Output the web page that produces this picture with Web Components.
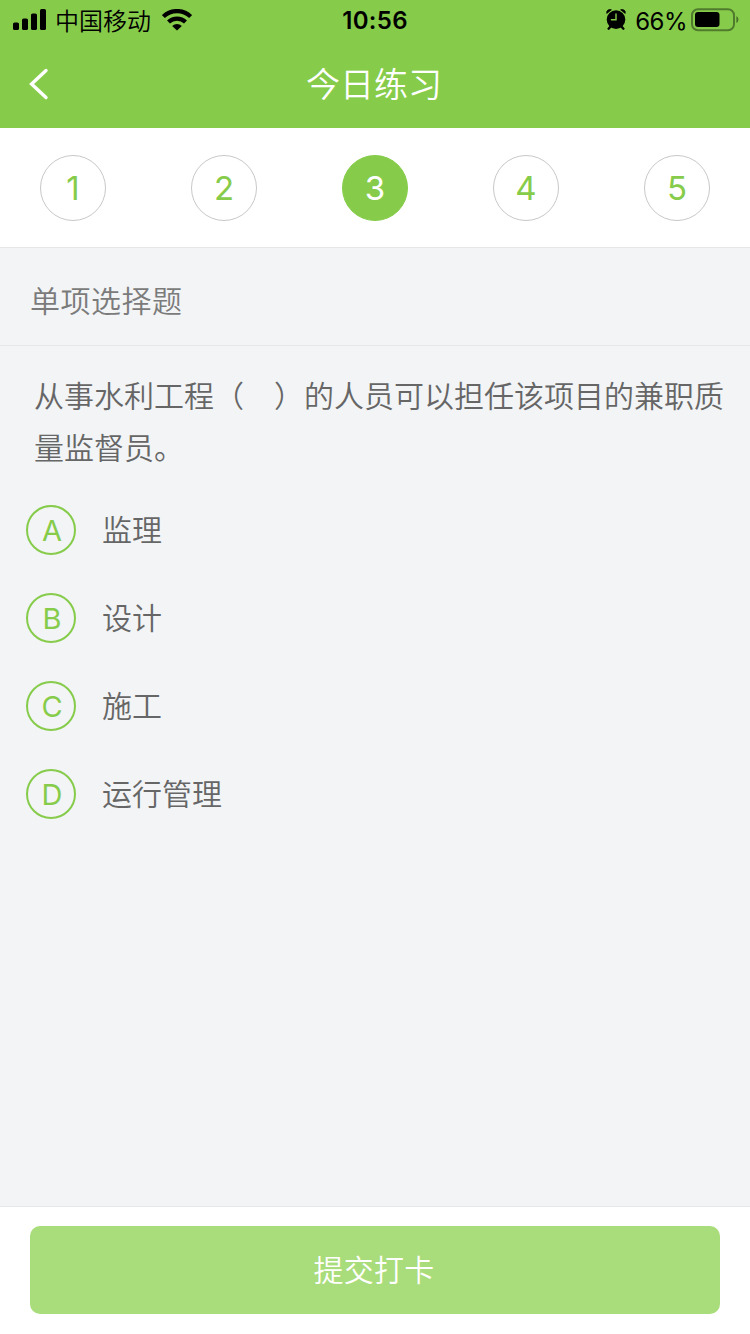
<!DOCTYPE html>
<html lang="zh-CN">
<head>
<meta charset="utf-8">
<meta name="viewport" content="width=device-width, initial-scale=1">
<title>今日练习</title>
<style>
  :root {
    --green: #86cc4a;
    --green-soft: #a9dc7a;
    --line: #e6e7e9;
    --page: #f2f4f6;
  }
  body {
    margin: 0;
    background: var(--page);
    font-family: Inter, "Noto Sans CJK SC", sans-serif;
    font-weight: 350;
  }
</style>
</head>
<body>
<practice-page>
  <status-bar slot="top" carrier="中国移动" time="10:56" battery="66"></status-bar>
  <nav-bar slot="top">今日练习</nav-bar>
  <step-list slot="top">
    <step-dot>1</step-dot>
    <step-dot>2</step-dot>
    <step-dot active>3</step-dot>
    <step-dot>4</step-dot>
    <step-dot>5</step-dot>
  </step-list>
  <section-title>单项选择题</section-title>
  <question-block>
    从事水利工程（　）的人员可以担任该项目的兼职质量监督员。
    <answer-option slot="options" key="A">监理</answer-option>
    <answer-option slot="options" key="B">设计</answer-option>
    <answer-option slot="options" key="C">施工</answer-option>
    <answer-option slot="options" key="D">运行管理</answer-option>
  </question-block>
  <submit-bar slot="bottom">提交打卡</submit-bar>
</practice-page>

<script>
class PracticePage extends HTMLElement {
  connectedCallback() {
    this.attachShadow({ mode: 'open' });
    this.shadowRoot.innerHTML = `
      <style>
        :host {
          display: flex;
          flex-direction: column;
          height: 1334px;
          overflow: hidden;
        }
        main {
          flex: 1;
          min-height: 0;
        }
      </style>
      <slot name="top"></slot>
      <main><slot></slot></main>
      <slot name="bottom"></slot>
    `;
  }
}
customElements.define('practice-page', PracticePage);

class StatusBar extends HTMLElement {
  connectedCallback() {
    this.attachShadow({ mode: 'open' });
    this.shadowRoot.innerHTML = `
      <style>
        :host {
          display: grid;
          grid-template-columns: 1fr auto 1fr;
          align-items: center;
          height: 40px;
          padding: 0 11px 0 13px;
          background: var(--green);
          color: #000;
          font-size: 24px;
        }
        svg {
          display: block;
        }
        .left, .right {
          display: flex;
          align-items: center;
        }
        .right {
          justify-content: flex-end;
        }
        .carrier {
          margin: 0 11px 0 9px;
          line-height: 36px;
          padding-top: 4px;
        }
        .time {
          padding: 2px 2px 0 0;
          font-size: 24px;
          font-weight: 600;
          letter-spacing: 0.3px;
          line-height: 38px;
        }
        .percent {
          margin: 0 4px 0 9px;
          padding-top: 3px;
          font-weight: 400;
          line-height: 37px;
          letter-spacing: -0.5px;
        }
      </style>
      <div class="left">
        <svg width="33" height="22" viewBox="0 0 33 22">
          <rect x="0" y="13.5" width="6" height="7.5" rx="1.6"></rect>
          <rect x="9" y="9.5" width="6" height="11.5" rx="1.6"></rect>
          <rect x="18" y="4.5" width="6" height="16.5" rx="1.6"></rect>
          <rect x="27" y="0" width="6" height="21" rx="1.6"></rect>
        </svg>
        <span class="carrier">${this.getAttribute('carrier')}</span>
        <svg width="30" height="22" viewBox="0 0 30 22">
          <g fill="none" stroke="#000" stroke-width="4.2">
            <path d="M1.4 7.6a19.4 19.4 0 0 1 27.2 0"></path>
            <path d="M6.5 13.1a12.2 12.2 0 0 1 17 0"></path>
          </g>
          <path d="M10.2 17a7 7 0 0 1 9.6 0L15 21.6z"></path>
        </svg>
      </div>
      <div class="time">${this.getAttribute('time')}</div>
      <div class="right">
        <svg width="20" height="22" viewBox="0 0 20 22">
          <circle cx="10" cy="10.6" r="9.3"></circle>
          <path d="M.8 4.4a3.2 3.2 0 0 1 4.6-3.6zM19.2 4.4a3.2 3.2 0 0 0-4.6-3.6z" stroke="#000" stroke-width=".8"></path>
          <path d="M4.6 17.5l-2 2.2M15.4 17.5l2 2.2" stroke="#000" stroke-width="2.4" stroke-linecap="round"></path>
          <path d="M10 5v5.8H5.4" fill="none" stroke="#86cc4a" stroke-width="1.4" stroke-linecap="round"></path>
        </svg>
        <span class="percent">${this.getAttribute('battery')}%</span>
        <svg width="48" height="24" viewBox="0 0 48 24">
          <rect x="1" y="1.2" width="42" height="21" rx="6" fill="none" stroke="#000" stroke-opacity=".4" stroke-width="2"></rect>
          <rect x="4" y="4" width="24.5" height="15" rx="3"></rect>
          <path d="M45.4 8a4 4 0 0 1 0 7z" fill-opacity=".45"></path>
        </svg>
      </div>
    `;
  }
}
customElements.define('status-bar', StatusBar);

class NavBar extends HTMLElement {
  connectedCallback() {
    this.attachShadow({ mode: 'open' });
    this.shadowRoot.innerHTML = `
      <style>
        :host {
          display: grid;
          grid-template-columns: 60px 1fr 62px;
          align-items: center;
          height: 88px;
          background: var(--green);
          color: #fff;
          font-size: 34px;
          text-align: center;
        }
        svg {
          display: block;
          margin-left: 28px;
        }
        .title {
          padding-top: 2px;
          line-height: 86px;
        }
      </style>
      <svg width="22" height="34" viewBox="0 0 22 34">
        <path d="M18 3.5L3.6 17.1L18 30.5" fill="none" stroke="#fff" stroke-width="3.4" stroke-linecap="round"></path>
      </svg>
      <div class="title"><slot></slot></div>
    `;
  }
}
customElements.define('nav-bar', NavBar);

class StepList extends HTMLElement {
  connectedCallback() {
    this.attachShadow({ mode: 'open' });
    this.shadowRoot.innerHTML = `
      <style>
        :host {
          display: flex;
          justify-content: space-between;
          align-items: center;
          box-sizing: border-box;
          height: 120px;
          padding: 0 40px;
          background: #fff;
          border-bottom: 1px solid var(--line);
        }
      </style>
      <slot></slot>
    `;
  }
}
customElements.define('step-list', StepList);

class StepDot extends HTMLElement {
  connectedCallback() {
    this.attachShadow({ mode: 'open' });
    this.shadowRoot.innerHTML = `
      <style>
        :host {
          box-sizing: border-box;
          display: block;
          width: 66px;
          height: 66px;
          border: 1px solid #c8c8c8;
          border-radius: 50%;
          color: var(--green);
          font-size: 33px;
          font-weight: 400;
          line-height: 65px;
          text-align: center;
        }
        :host([active]) {
          background: var(--green);
          border-color: var(--green);
          color: #fff;
        }
      </style>
      <slot></slot>
    `;
  }
}
customElements.define('step-dot', StepDot);

class SectionTitle extends HTMLElement {
  connectedCallback() {
    this.attachShadow({ mode: 'open' });
    this.shadowRoot.innerHTML = `
      <style>
        :host {
          display: block;
          height: 97px;
          padding-left: 30px;
          border-bottom: 1px solid var(--line);
          color: #7b7b7b;
          font-size: 30px;
          letter-spacing: 0.5px;
          line-height: 107px;
        }
      </style>
      <slot></slot>
    `;
  }
}
customElements.define('section-title', SectionTitle);

class QuestionBlock extends HTMLElement {
  connectedCallback() {
    this.attachShadow({ mode: 'open' });
    this.shadowRoot.innerHTML = `
      <style>
        :host {
          display: block;
          padding: 24px 26px 0;
          color: #666;
          font-size: 30px;
        }
        .stem {
          margin: 0 0 0 8px;
          line-height: 52px;
        }
        .options {
          display: flex;
          flex-direction: column;
          gap: 38px;
          margin-top: 31px;
        }
      </style>
      <p class="stem"><slot></slot></p>
      <div class="options"><slot name="options"></slot></div>
    `;
  }
}
customElements.define('question-block', QuestionBlock);

class AnswerOption extends HTMLElement {
  connectedCallback() {
    this.attachShadow({ mode: 'open' });
    this.shadowRoot.innerHTML = `
      <style>
        :host {
          display: flex;
          align-items: center;
          gap: 26px;
          height: 50px;
          line-height: 50px;
        }
        .key {
          box-sizing: border-box;
          width: 50px;
          height: 50px;
          padding-left: 2px;
          border: 2px solid var(--green);
          border-radius: 50%;
          color: var(--green);
          font-size: 29px;
          font-weight: 400;
          line-height: 48px;
          text-align: center;
        }
      </style>
      <span class="key">${this.getAttribute('key')}</span>
      <span><slot></slot></span>
    `;
  }
}
customElements.define('answer-option', AnswerOption);

class SubmitBar extends HTMLElement {
  connectedCallback() {
    this.attachShadow({ mode: 'open' });
    this.shadowRoot.innerHTML = `
      <style>
        :host {
          display: block;
          padding: 19px 30px 20px;
          background: #fff;
          border-top: 1px solid var(--line);
        }
        button {
          display: block;
          width: 100%;
          height: 88px;
          padding: 0 2px 0 0;
          border: 0;
          border-radius: 10px;
          background: var(--green-soft);
          color: #fff;
          font: inherit;
          font-size: 30px;
          letter-spacing: 0.3px;
          line-height: 88px;
        }
      </style>
      <button><slot></slot></button>
    `;
  }
}
customElements.define('submit-bar', SubmitBar);
</script>
</body>
</html>
